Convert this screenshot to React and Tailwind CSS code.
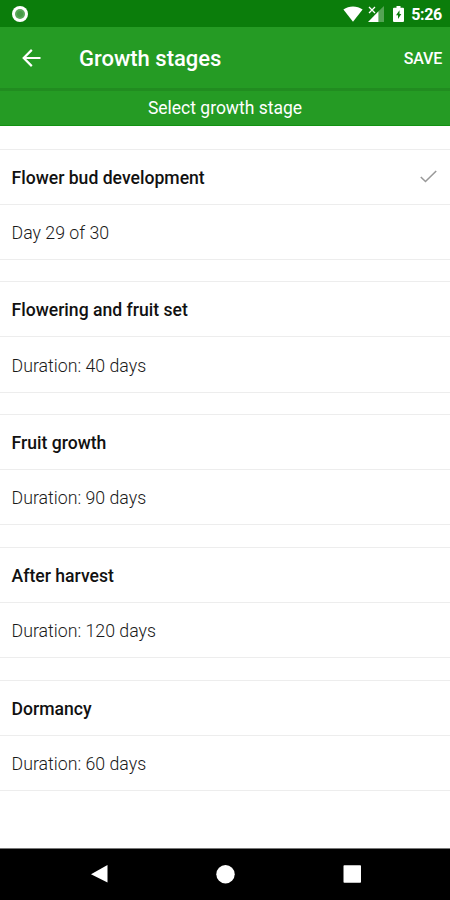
import React, { useState } from 'react';

const STAGES = [
  { name: 'Flower bud development', detail: 'Day 29 of 30' },
  { name: 'Flowering and fruit set', detail: 'Duration: 40 days' },
  { name: 'Fruit growth', detail: 'Duration: 90 days' },
  { name: 'After harvest', detail: 'Duration: 120 days' },
  { name: 'Dormancy', detail: 'Duration: 60 days' },
];

const StatusBar = () => (
  <div className="h-[27px] shrink-0 bg-[#0b7d0b] text-white flex items-center pl-3 pr-2">
    <svg className="w-4 h-4" viewBox="0 0 16 16">
      <circle cx="8" cy="8" r="8" fill="#fff" />
      <circle cx="8" cy="8" r="5" fill="#5aa85a" />
      <circle cx="8" cy="8" r="3" fill="#489a48" />
    </svg>
    <div className="ml-auto flex items-center">
      <svg className="w-[20px] h-4" viewBox="0 0 20 16" fill="currentColor">
        <path d="M10 15.8 0.4 3.6C6 -0.5 14 -0.5 19.6 3.6Z" />
      </svg>
      <svg className="ml-[5px] w-[16px] h-4" viewBox="0 0 16 16">
        <path d="M10.5 5.2 16 0v16h-5.5Z" fill="#fff" fillOpacity="0.3" />
        <path d="M0 16 10.5 5.2V16Z" fill="#fff" />
        <path d="m1 1 6 6M7 1 1 7" stroke="#fff" strokeWidth="1.3" />
      </svg>
      <svg className="ml-[9px] w-[11px] h-4" viewBox="0 0 11 16">
        <path d="M3.5 0h4v1.7H10q1 0 1 1V15q0 1-1 1H1q-1 0-1-1V2.7q0-1 1-1h2.5Z" fill="#fff" />
        <path d="M6.5 4.3 3 9.3h2V13L8.3 8H6.5Z" fill="#0b7d0b" />
      </svg>
      <span className="ml-[7px] pt-[2px] text-[16px] tracking-[-0.3px] leading-none font-bold">5:26</span>
    </div>
  </div>
);

const Toolbar = () => (
  <header className="h-[64px] shrink-0 bg-[#259b24] border-b-[3px] border-[#218c20] text-white flex items-center pl-[22px] pr-2">
    <button type="button" aria-label="Back">
      <svg className="w-[19px] h-[18px]" viewBox="0 0 19 18" fill="none" stroke="currentColor" strokeWidth="2.2">
        <path d="M18.5 9H1.8M9.8 0.9 1.7 9l8.100 8.100" />
      </svg>
    </button>
    <h1 className="ml-[38px] pt-[2px] text-[22px] font-medium">Growth stages</h1>
    <button type="button" className="ml-auto pt-[2px] text-[16px] tracking-[-0.2px] font-medium">SAVE</button>
  </header>
);

const Stage = ({ stage, selected, onSelect }) => (
  <li className="h-[111.3px] mb-[21.5px] flex flex-col border-y border-[#ededed]" onClick={onSelect}>
    <div className="h-[55.2px] flex items-center justify-between pl-[11.5px] pr-[13px] border-b border-[#ededed]">
      <span className="pt-[2px] text-[17.6px] leading-6 font-medium text-[#111111]">{stage.name}</span>
      {selected && (
        <svg className="w-[17px] h-[13px]" viewBox="0 0 17 13" fill="none" stroke="#999999" strokeWidth="1.6">
          <path d="M0.8 7 5.5 11.5 16.2 1" />
        </svg>
      )}
    </div>
    <div className="flex-1 flex items-center pt-[2px] pl-[11.5px] text-[17.75px] leading-6 font-light text-[#1a1a1a]">{stage.detail}</div>
  </li>
);

const NavBar = () => (
  <nav className="h-[52px] shrink-0 bg-black border-t border-[#777777]">
    <svg className="w-full h-[51px]" viewBox="0 0 450 51" fill="#fff">
      <path d="M107.500 16v17.500L91 25.200Z" />
      <circle cx="225.500" cy="25.200" r="9.200" />
      <rect x="343.500" y="16.200" width="17.500" height="17.500" rx="0.800" />
    </svg>
  </nav>
);

export default function App() {
  const [selected, setSelected] = useState(0);

  return (
    <div className="w-[450px] h-[900px] bg-white flex flex-col overflow-hidden font-['Roboto',sans-serif]">
      <StatusBar />
      <Toolbar />
      <div className="h-[35px] shrink-0 bg-[#259b24] border-b border-[#129212] text-white text-[17.5px] flex items-center justify-center">
        Select growth stage
      </div>
      <ul className="flex-1 min-h-0 pt-[22.5px]">
        {STAGES.map((stage, i) => (
          <Stage key={stage.name} stage={stage} selected={i === selected} onSelect={() => setSelected(i)} />
        ))}
      </ul>
      <NavBar />
    </div>
  );
}
